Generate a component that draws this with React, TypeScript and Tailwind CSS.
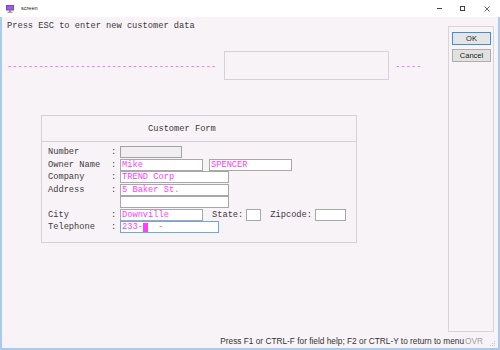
import React from "react";

const mono = "font-['Liberation_Mono','Courier_New',monospace] text-[8.7px] leading-[12px]";
const sans = "font-['Liberation_Sans',Arial,sans-serif]";
const dash = "font-['DejaVu_Sans_Mono',monospace] text-[#ff44ff] whitespace-pre";

const Field = ({
  w,
  value,
  kind = "normal",
  children,
}: {
  w: string;
  value?: string;
  kind?: "normal" | "disabled" | "focus";
  children?: React.ReactNode;
}) => {
  const look =
    kind === "disabled"
      ? "bg-[#f0eef0] border-[#a3a3a3]"
      : kind === "focus"
      ? "bg-white border-[#6aa8e2]"
      : "bg-white border-[#a8a8a8]";
  return (
    <div className={`${w} h-[12px] border ${look} flex items-center pl-px text-[#ff3cff] whitespace-pre overflow-hidden`}>
      {value}
      {children}
    </div>
  );
};

const Row = ({ label, children }: { label?: string; children: React.ReactNode }) => (
  <div className="h-[12.5px] flex items-center">
    <span className="w-[63px] text-[#3c3c3c] whitespace-pre">{label}</span>
    <span className="w-[9px] text-[#3c3c3c]">{label ? ":" : ""}</span>
    {children}
  </div>
);

export default function App() {
  return (
    <div className="w-[500px] h-[350px] flex flex-col bg-white overflow-hidden">
      {/* title bar */}
      <div className="h-[17px] flex items-center bg-white">
        <svg width="8" height="8" viewBox="0 0 8 8" className="ml-[6px]">
          <rect x="0" y="0" width="8" height="5.5" fill="#7b3cc0" />
          <rect x="0.8" y="0.8" width="6.4" height="3.9" fill="#9a5fdc" />
          <rect x="3" y="5.5" width="2" height="1.2" fill="#6a6a8a" />
          <rect x="1.5" y="6.7" width="5" height="1" fill="#7a7a9a" />
        </svg>
        <span className={`${sans} text-[5.5px] text-[#222] ml-[7px]`}>screen</span>
        <div className="ml-auto flex items-center mr-[10px] text-[#333]">
          <div className="w-[5px] h-px bg-[#444]" />
          <div className="w-[5px] h-[5px] border border-[#444] ml-[18px]" />
          <svg width="6" height="6" viewBox="0 0 6 6" className="ml-[19px]">
            <path d="M0.5 0.5L5.5 5.5M5.5 0.5L0.5 5.5" stroke="#444" strokeWidth="0.8" />
          </svg>
        </div>
      </div>

      {/* client area */}
      <div className="flex-1 flex flex-col bg-[#f8f3f7] border-l-2 border-r-2 border-b-2 border-[#a9cbe9]">
        <div className="flex-1 flex">
          {/* main */}
          <div className={`flex-1 flex flex-col ${mono}`}>
            <div className="pt-[3px] pl-[5px] text-[#3a3a3a]">Press ESC to enter new customer data</div>
            <div className="mt-[19px] pl-[5px] flex items-center">
              <span className={dash}>{"-".repeat(40)}</span>
              <div className="ml-[8px] w-[165px] h-[29px] border border-[#d6d2d6]" />
              <span className={`ml-[6px] ${dash}`}>{"-".repeat(5)}</span>
            </div>

            {/* form */}
            <div className="ml-[39px] mt-[35px] w-[316px] h-[128px] border border-[#d5d1d5] flex flex-col">
              <div className="h-[26px] flex items-center pl-[106px] text-[#3a3a3a] border-b border-[#d5d1d5]">
                Customer Form
              </div>
              <div className="pt-[4px] pl-[6px] flex flex-col">
                <Row label="Number">
                  <Field w="w-[62px]" kind="disabled" />
                </Row>
                <Row label="Owner Name">
                  <Field w="w-[83px]" value="Mike" />
                  <div className="ml-[6px]">
                    <Field w="w-[83px]" value="SPENCER" />
                  </div>
                </Row>
                <Row label="Company">
                  <Field w="w-[109px]" value="TREND Corp" />
                </Row>
                <Row label="Address">
                  <Field w="w-[109px]" value="5 Baker St." />
                </Row>
                <Row>
                  <Field w="w-[109px]" />
                </Row>
                <Row label="City">
                  <Field w="w-[83px]" value="Downville" />
                  <span className="ml-[9px] text-[#3c3c3c]">State:</span>
                  <div className="ml-[3px]">
                    <Field w="w-[15px]" />
                  </div>
                  <span className="ml-[9px] text-[#3c3c3c]">Zipcode:</span>
                  <div className="ml-[3px]">
                    <Field w="w-[31px]" />
                  </div>
                </Row>
                <Row label="Telephone">
                  <Field w="w-[99px]" kind="focus">
                    233-
                    <span className="inline-block w-[5px] h-[9px] bg-[#ff3cff]" />
                    {"  -"}
                  </Field>
                </Row>
              </div>
            </div>
          </div>

          {/* button panel */}
          <div className={`w-[46px] mt-[9px] mb-[2px] mr-[4px] border border-[#d8d4d8] flex flex-col items-start pl-[3px] pt-[5px] gap-[4px] ${sans}`}>
            <button className="w-[39px] h-[13px] border border-[#3d8ee0] bg-[#e5e5e5] text-[7.5px] leading-none text-[#222]">
              OK
            </button>
            <button className="w-[39px] h-[13px] border border-[#adadad] bg-[#e1e1e1] text-[7.5px] leading-none text-[#222]">
              Cancel
            </button>
          </div>
        </div>

        {/* status bar */}
        <div className={`h-[14px] flex items-center justify-end pr-[2px] ${sans} text-[8.3px]`}>
          <span className="text-[#333]">Press F1 or CTRL-F for field help; F2 or CTRL-Y to return to menu</span>
          <span className="ml-[1px] text-[#a0a0a0]">OVR</span>
          <svg width="8" height="8" viewBox="0 0 8 8" className="ml-[5px] mt-[3px]">
            <g fill="#c8c8c8">
              <rect x="6" y="2" width="1" height="1" />
              <rect x="4" y="4" width="1" height="1" />
              <rect x="6" y="4" width="1" height="1" />
              <rect x="2" y="6" width="1" height="1" />
              <rect x="4" y="6" width="1" height="1" />
              <rect x="6" y="6" width="1" height="1" />
            </g>
          </svg>
        </div>
      </div>
    </div>
  );
}
